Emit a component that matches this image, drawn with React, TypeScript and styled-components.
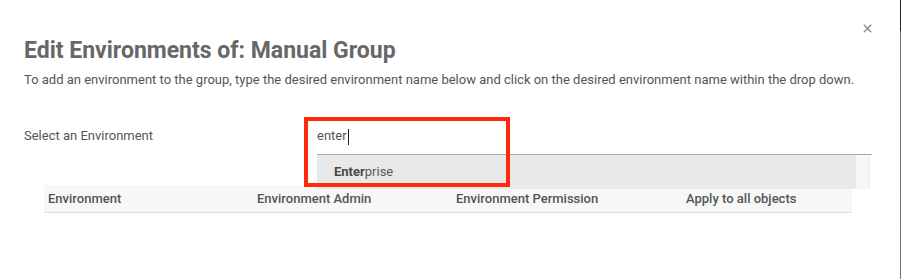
import React from 'react';
import styled, { createGlobalStyle } from 'styled-components';

const GlobalStyle = createGlobalStyle`
  html, body {
    margin: 0;
    padding: 0;
    background: #ffffff;
  }
  body {
    font-family: Roboto, 'Liberation Sans', Arial, sans-serif;
    color: #555555;
  }
`;

const columns = [
  { label: 'Environment', width: 209 },
  { label: 'Environment Admin', width: 199 },
  { label: 'Environment Permission', width: 230 },
  { label: 'Apply to all objects', width: 170 },
];

const App: React.FC = () => {
  return (
    <Page>
      <GlobalStyle />
      <Modal>
        <TopBar>
          <CloseButton aria-label="Close">
            <svg width="9" height="9" viewBox="0 0 9 9">
              <path d="M0.8 0.8 L8.2 8.2 M8.2 0.8 L0.8 8.2" stroke="#8a8a8a" strokeWidth="1.4" />
            </svg>
          </CloseButton>
        </TopBar>
        <Title>Edit Environments of: Manual Group</Title>
        <Description>
          To add an environment to the group, type the desired environment name below and click on the desired
          environment name within the drop down.
        </Description>
        <FormRow>
          <Label>Select an Environment</Label>
          <InputWrap>
            <InputField>
              enter
              <Caret />
            </InputField>
            <Dropdown>
              <Option>
                <b>Enter</b>prise
              </Option>
              <ScrollTrack />
            </Dropdown>
            <Highlight />
          </InputWrap>
        </FormRow>
        <Table>
          <HeaderRow>
            {columns.map(c => (
              <HeaderCell key={c.label} width={c.width}>
                {c.label}
              </HeaderCell>
            ))}
          </HeaderRow>
        </Table>
      </Modal>
      <EdgeStrip />
    </Page>
  );
};

export default App;

const Page = styled.div`
  display: flex;
  width: 901px;
  height: 279px;
  overflow: hidden;
`;

const Modal = styled.div`
  flex: 1;
  display: flex;
  flex-direction: column;
  padding: 20px 28px 0 24px;
  background: #ffffff;
`;

const TopBar = styled.div`
  display: flex;
  justify-content: flex-end;
  align-items: center;
  height: 16px;
`;

const CloseButton = styled.button`
  display: flex;
  padding: 0;
  border: 0;
  background: none;
  cursor: pointer;
`;

const Title = styled.h2`
  margin: 1px 0 0;
  font-size: 23px;
  line-height: 28px;
  font-weight: 700;
  color: #676767;
  white-space: nowrap;
`;

const Description = styled.p`
  margin: 6px 0 0;
  font-size: 13px;
  line-height: 18px;
  color: #555555;
  white-space: nowrap;
`;

const FormRow = styled.div`
  display: grid;
  grid-template-columns: 293px 555px;
  margin-top: 38px;
`;

const Label = styled.div`
  font-size: 13px;
  line-height: 18px;
  color: #555555;
`;

const InputWrap = styled.div`
  position: relative;
`;

const InputField = styled.div`
  display: flex;
  align-items: flex-start;
  height: 27px;
  font-size: 13px;
  line-height: 18px;
  color: #555555;
  border-bottom: 1px solid #a9a9a9;
`;

const Caret = styled.span`
  display: inline-block;
  width: 1px;
  height: 16px;
  margin: 2px 0 0 1px;
  background: #222222;
`;

const Dropdown = styled.div`
  position: absolute;
  top: 100%;
  left: 0;
  z-index: 2;
  display: flex;
  width: 553px;
  height: 34px;
`;

const Option = styled.div`
  flex: 1;
  padding-left: 17px;
  font-size: 13px;
  line-height: 34px;
  color: #5a5a5a;
  background: #e9e9e9;

  b {
    font-weight: 700;
    color: #474747;
  }
`;

const ScrollTrack = styled.div`
  width: 13px;
  background: #f7f7f7;
  border-right: 1px solid #ececec;
`;

const Highlight = styled.div`
  position: absolute;
  left: -13px;
  top: -10px;
  z-index: 3;
  width: 206px;
  height: 70px;
  box-sizing: border-box;
  border: 4px solid #fd2a0c;
  pointer-events: none;
`;

const Table = styled.div`
  margin: 30px 0 0 20px;
  width: 808px;
`;

const HeaderRow = styled.div`
  display: flex;
  height: 27px;
  background: #f7f7f7;
  border-bottom: 1px solid #dddddd;
`;

const HeaderCell = styled.div<{ width: number }>`
  flex: 0 0 ${p => p.width}px;
  box-sizing: border-box;
  padding-left: 4px;
  font-size: 13px;
  line-height: 27px;
  font-weight: 500;
  color: #555555;
`;

const EdgeStrip = styled.div`
  flex: 0 0 3px;
  background: linear-gradient(
    to bottom,
    #11284a 0,
    #11284a 31px,
    #707070 31px,
    #707070 73px,
    #8a8a8a 73px,
    #707070 74px,
    #707070 199px,
    #8a8a8a 199px,
    #707070 200px,
    #707070 230px,
    #8a8a8a 230px,
    #707070 231px
  );
`;
